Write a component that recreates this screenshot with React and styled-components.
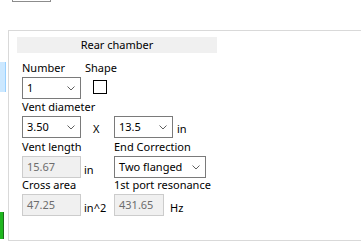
import React from "react";
import styled, { createGlobalStyle } from "styled-components";

const GlobalStyle = createGlobalStyle`
  * { box-sizing: border-box; }
  body {
    margin: 0;
    background: #ffffff;
    font-family: "Segoe UI", "Noto Sans", sans-serif;
    font-size: 11px;
    color: #000000;
  }
`;

const Page = styled.div`
  width: 361px;
  height: 244px;
  overflow: hidden;
  background: #ffffff;
`;

// clipped bits of the control above
const TopStrip = styled.div`
  height: 30px;
  display: flex;
  align-items: flex-start;
  overflow: hidden;
`;

const CutBox = styled.div`
  width: 47px;
  height: 20px;
  margin: -18px 0 0 12px;
  border: 1px solid #8c8c8c;
`;

const CutText = styled.span`
  margin-top: -12px;
  margin-left: ${(p) => p.$gap}px;
  line-height: 15px;
`;

const Body = styled.div`
  display: flex;
  height: 210px;
`;

const Side = styled.div`
  width: 8px;
  display: flex;
  flex-direction: column;
`;

const SideItem = styled.div`
  width: ${(p) => p.$w}px;
  height: ${(p) => p.$h}px;
  margin-top: ${(p) => p.$top}px;
  background: ${(p) => p.$bg};
  border-right: 1px solid ${(p) => p.$border};
`;

const Panel = styled.div`
  flex: 1;
  height: 211px;
  border: 1px solid #d9d9d9;
  border-right: none;
  padding: 6px 0 0 8px;
`;

const Header = styled.div`
  width: 200px;
  height: 16px;
  background: #f0f0f0;
  text-align: center;
  line-height: 16px;
`;

const Form = styled.div`
  padding: 7px 0 0 5px;
  display: flex;
  flex-direction: column;
`;

const Row = styled.div`
  display: flex;
  align-items: flex-start;
  margin-top: ${(p) => p.$mt || 0}px;
`;

const Field = styled.div`
  display: flex;
  flex-direction: column;
  width: ${(p) => (p.$w ? `${p.$w}px` : "auto")};
  margin-left: ${(p) => p.$ml || 0}px;
`;

const Label = styled.div`
  height: 16px;
  line-height: 16px;
  white-space: nowrap;
  margin-bottom: 1px;
`;

const Combo = styled.div`
  width: ${(p) => p.$w}px;
  height: 22px;
  border: 1px solid #7a7a7a;
  background: #ffffff;
  display: flex;
  align-items: center;
  justify-content: space-between;
  padding: 0 5px 0 4px;
  line-height: 20px;
`;

const ReadOnly = styled.div`
  width: ${(p) => p.$w}px;
  height: 22px;
  border: 1px solid #cccccc;
  background: #f0f0f0;
  color: #6d6d6d;
  padding: 0 4px;
  line-height: 20px;
`;

const Unit = styled.span`
  margin-left: ${(p) => p.$ml}px;
  padding-top: ${(p) => p.$pt}px;
  line-height: 16px;
`;

const Check = styled.div`
  width: 14px;
  height: 14px;
  border: 1px solid #000000;
  margin: 3px 0 0 8px;
  background: #ffffff;
`;

const Cross = styled.span`
  width: 33px;
  padding: 5px 0 0 12px;
  line-height: 16px;
`;

const Gap = styled.div`
  height: ${(p) => p.$h}px;
`;

function Chevron() {
  return (
    <svg width="8" height="5" viewBox="0 0 8 5">
      <path d="M0.5 0.5 L4 4 L7.5 0.5" fill="none" stroke="#606060" strokeWidth="1" />
    </svg>
  );
}

function Select({ w, value }) {
  return (
    <Combo $w={w}>
      <span>{value}</span>
      <Chevron />
    </Combo>
  );
}

export default function App() {
  return (
    <Page>
      <GlobalStyle />
      <TopStrip>
        <CutBox />
        <CutText $gap={66}>10</CutText>
        <CutText $gap={225}>2</CutText>
      </TopStrip>
      <Body>
        <Side>
          <SideItem $w={6} $h={30} $top={32} $bg="#cce8ff" $border="#99d1ff" />
          <SideItem $w={4} $h={27} $top={120} $bg="#1fb71f" $border="#1d6b1d" />
        </Side>
        <Panel>
          <Header>Rear chamber</Header>
          <Form>
            <Row>
              <Field $w={59}>
                <Label>Number</Label>
                <Select w={59} value="1" />
              </Field>
              <Field $ml={4}>
                <Label>Shape</Label>
                <Check />
              </Field>
            </Row>
            <Label>Vent diameter</Label>
            <Row>
              <Select w={59} value="3.50" />
              <Cross>X</Cross>
              <Select w={59} value="13.5" />
              <Unit $ml={4} $pt={5}>in</Unit>
            </Row>
            <Gap $h={1} />
            <Row>
              <Field $w={92}>
                <Label>Vent length</Label>
                <Row>
                  <ReadOnly $w={59}>15.67</ReadOnly>
                  <Unit $ml={3} $pt={6}>in</Unit>
                </Row>
              </Field>
              <Field>
                <Label>End Correction</Label>
                <Select w={92} value="Two flanged" />
              </Field>
            </Row>
            <Row $mt={-1}>
              <Field $w={92}>
                <Label>Cross area</Label>
                <Row>
                  <ReadOnly $w={59}>47.25</ReadOnly>
                  <Unit $ml={3} $pt={6}>in^2</Unit>
                </Row>
              </Field>
              <Field>
                <Label>1st port resonance</Label>
                <Row>
                  <ReadOnly $w={50}>431.65</ReadOnly>
                  <Unit $ml={6} $pt={6}>Hz</Unit>
                </Row>
              </Field>
            </Row>
          </Form>
        </Panel>
      </Body>
    </Page>
  );
}
